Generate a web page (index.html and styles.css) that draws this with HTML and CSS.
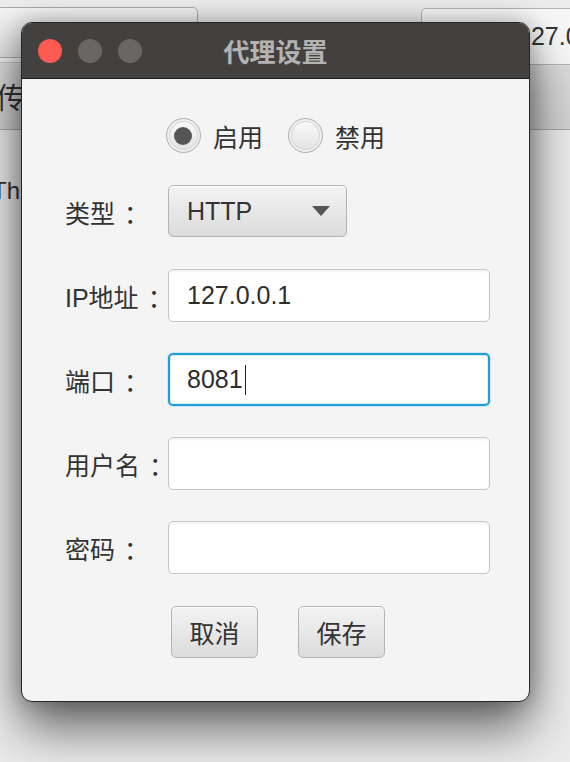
FILE: index.html
```html
<!DOCTYPE html>
<html lang="zh-CN">
<head>
<meta charset="utf-8">
<title>代理设置</title>
<link rel="stylesheet" href="styles.css">
</head>
<body>
<div class="desk">
  <div class="app">
    <div class="app-top">
      <div class="app-btn"></div>
      <div class="app-field"><span class="app-field-text">127.0.0.1</span></div>
    </div>
    <div class="app-band"><span class="band-text">传输</span></div>
    <div class="app-body"><p class="body-text">This</p></div>
  </div>

  <div class="dialog">
    <div class="titlebar">
      <div class="lights">
        <span class="light red"></span>
        <span class="light"></span>
        <span class="light"></span>
      </div>
      <div class="title">代理设置</div>
      <div class="spacer"></div>
    </div>
    <div class="content">
      <div class="radios">
        <div class="radio"><span class="radio-circle"><span class="radio-dot"></span></span><span>启用</span></div>
        <div class="radio"><span class="radio-circle"></span><span>禁用</span></div>
      </div>
      <div class="form">
        <div class="label">类型<span class="colon">：</span></div>
        <div class="combo"><span>HTTP</span><span class="arrow"></span></div>

        <div class="label">IP地址<span class="colon">：</span></div>
        <div class="field">127.0.0.1</div>

        <div class="label">端口<span class="colon">：</span></div>
        <div class="field focused">8081<span class="caret"></span></div>

        <div class="label">用户名<span class="colon">：</span></div>
        <div class="field"></div>

        <div class="label">密码<span class="colon">：</span></div>
        <div class="field"></div>
      </div>
      <div class="buttons">
        <div class="btn">取消</div>
        <div class="btn">保存</div>
      </div>
    </div>
  </div>
</div>
</body>
</html>
```
FILE: styles.css
```css
html, body {
  margin: 0;
  padding: 0;
}
body {
  width: 570px;
  height: 762px;
  overflow: hidden;
  font-family: "Liberation Sans", "Noto Sans CJK SC", sans-serif;
  color: #333;
}
.desk {
  position: relative;
  width: 570px;
  height: 762px;
  overflow: hidden;
}

/* background application window */
.app {
  display: flex;
  flex-direction: column;
  height: 100%;
}
.app-top {
  flex: none;
  height: 62px;
  box-sizing: border-box;
  padding-top: 7px;
  display: flex;
  justify-content: space-between;
  align-items: flex-start;
  background: #ececec;
}
.app-btn {
  margin-left: -10px;
  width: 208px;
  height: 51px;
  box-sizing: border-box;
  border: 1px solid #a9a9a9;
  border-radius: 5px;
  background: linear-gradient(#f4f4f4, #dedede);
}
.app-field {
  margin-top: 1px;
  margin-right: -20px;
  width: 169px;
  height: 57px;
  box-sizing: border-box;
  border: 1px solid #b4b4b4;
  border-radius: 5px;
  background: #f7f7f7;
  padding-left: 95px;
  font-size: 25px;
  line-height: 55px;
  white-space: nowrap;
  overflow: hidden;
  position: relative;
  z-index: 1;
}
.app-band {
  flex: none;
  height: 68px;
  box-sizing: border-box;
  border-top: 1px solid #c2c2c2;
  border-bottom: 1px solid #a9a9a9;
  background: linear-gradient(#dcdcdc, #d0d0d0);
  display: flex;
  align-items: center;
  white-space: nowrap;
}
.band-text {
  margin-left: -4px;
  font-size: 29px;
}
.app-body {
  flex: 1;
  background: #ebebeb;
}
.body-text {
  margin: 0 0 0 -8px;
  padding-top: 46px;
  font-size: 24px;
  line-height: 30px;
}

/* dialog window */
.dialog {
  position: absolute;
  left: 21px;
  top: 22px;
  width: 509px;
  height: 680px;
  box-sizing: border-box;
  border: 1px solid #262626;
  border-radius: 11px;
  overflow: hidden;
  background: #f4f4f4;
  box-shadow: 0 26px 50px rgba(0, 0, 0, 0.58), 0 0 22px rgba(0, 0, 0, 0.25);
  z-index: 2;
}
.titlebar {
  height: 55px;
  border-bottom: 1px solid #1c1c1c;
  background: #43413f;
  display: grid;
  grid-template-columns: 1fr auto 1fr;
  align-items: center;
}
.lights {
  display: flex;
  gap: 16px;
  padding-left: 16px;
}
.light {
  width: 24px;
  height: 24px;
  border-radius: 50%;
  background: #686765;
}
.light.red {
  background: #fd5a51;
}
.title {
  font-family: "Noto Sans CJK SC", sans-serif;
  font-size: 26px;
  font-weight: bold;
  color: #b3b3b3;
}

.content {
  padding-top: 39px;
  font-size: 25px;
}
.radios {
  display: flex;
  justify-content: center;
  gap: 25px;
  height: 35px;
}
.radio {
  display: flex;
  align-items: center;
  gap: 12px;
  font-family: "Noto Sans CJK SC", sans-serif;
}
.radio-circle {
  width: 35px;
  height: 35px;
  box-sizing: border-box;
  border-radius: 50%;
  border: 1px solid #b0b0b0;
  background: linear-gradient(#fbfbfb, #e1e1e1);
  box-shadow: inset 0 0 0 2px #f0f0f0, inset 0 0 0 3px #d6d6d6;
  display: flex;
  align-items: center;
  justify-content: center;
}
.radio-dot {
  width: 18px;
  height: 18px;
  border-radius: 50%;
  background: #555;
}

.form {
  margin-top: 32px;
  padding-left: 43px;
  display: grid;
  grid-template-columns: 103px 322px;
  grid-auto-rows: 53px;
  row-gap: 31px;
  align-items: center;
}
.label {
  color: #333;
  white-space: nowrap;
}
.colon {
  display: inline-block;
  padding-left: 9px;
}
.combo {
  width: 179px;
  height: 52px;
  align-self: start;
  box-sizing: border-box;
  border: 1px solid #b4b4b4;
  border-radius: 5px;
  background: linear-gradient(#f3f3f3, #dcdcdc);
  box-shadow: inset 0 1px 0 #ffffff;
  padding: 0 16px 0 18px;
  display: flex;
  align-items: center;
  justify-content: space-between;
}
.arrow {
  width: 0;
  height: 0;
  border-left: 9px solid transparent;
  border-right: 9px solid transparent;
  border-top: 10px solid #555;
}
.field {
  height: 53px;
  box-sizing: border-box;
  border: 1px solid #c6c6c6;
  border-radius: 5px;
  background: #fff;
  box-shadow: inset 0 2px 2px rgba(0, 0, 0, 0.05);
  padding-left: 18px;
  display: flex;
  align-items: center;
  color: #2d2d2d;
}
.field.focused {
  border: 2px solid #1f9ed8;
  padding-left: 17px;
  box-shadow: 0 0 0 1px #c9e7f5, inset 0 0 0 1px #d9eef8;
}
.caret {
  width: 1px;
  height: 30px;
  margin-left: 2px;
  background: #222;
}

.buttons {
  margin-top: 32px;
  padding-left: 5px;
  display: flex;
  justify-content: center;
  gap: 40px;
}
.btn {
  width: 87px;
  height: 52px;
  box-sizing: border-box;
  border: 1px solid #b4b4b4;
  border-radius: 5px;
  background: linear-gradient(#f3f3f3, #dcdcdc);
  box-shadow: inset 0 1px 0 #ffffff;
  display: flex;
  align-items: center;
  justify-content: center;
  font-family: "Noto Sans CJK SC", sans-serif;
  color: #333;
}
```
